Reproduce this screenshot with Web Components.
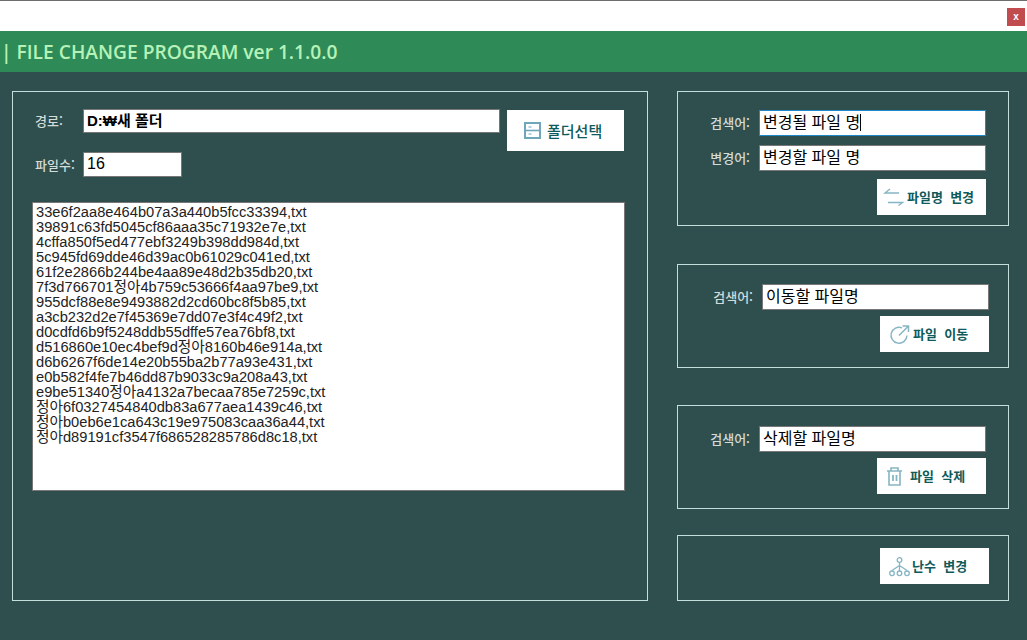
<!DOCTYPE html>
<html lang="ko">
<head>
<meta charset="utf-8">
<title>FILE CHANGE PROGRAM</title>
<style>
html,body{margin:0;height:640px;overflow:hidden;background:#2f4f4f}
</style>
</head>
<body>
<file-change-app></file-change-app>
<script>
/* ============ shared icon paths ============ */
var ICONS = {
  folder: '<rect x="1" y="1" width="15" height="15" fill="none" stroke-width="2"/><path d="M1 8.500h15" fill="none" stroke-width="1.600"/><path d="M4.500 5h3M4.500 12h3" fill="none" stroke-width="1.200"/>',
  swap: '<path d="M15 5H1l5-4M4 14.500h14.500l-4 3" fill="none" stroke-width="1.400"/>',
  move: '<path d="M12 2.800A8 8 0 1 0 17 10.500" fill="none" stroke-width="1.400"/><path d="M9 10.500L18 1.500M12.500 1h6v6" fill="none" stroke-width="1.500"/>',
  trash: '<path d="M0 4h15M4 4V1h7v3M2 4v14h11V4" fill="none" stroke-width="1.600"/><path d="M6 8v6M9.500 8v6" fill="none" stroke-width="1.800"/>',
  tree: '<circle cx="10.500" cy="3" r="2.300" fill="none" stroke-width="1.300"/><path d="M10.500 5.500v8.500M3 13.500l7.500-5 7.500 5" fill="none" stroke-width="1.300"/><circle cx="3" cy="16.300" r="2.300" fill="none" stroke-width="1.300"/><circle cx="10.500" cy="16.300" r="2.300" fill="none" stroke-width="1.300"/><circle cx="18" cy="16.300" r="2.300" fill="none" stroke-width="1.300"/>'
};
var KR = '"Noto Sans CJK KR",sans-serif';

/* title strip + green header */
class AppTitlebar extends HTMLElement {
  connectedCallback() {
    const root = this.attachShadow({ mode: 'open' });
    root.innerHTML = `<style>
:host{display:block}
.strip{box-sizing:border-box;height:31px;background:#fff;border-top:1px solid #6d6d6d;display:flex;justify-content:flex-end;align-items:flex-start;padding:7px 2px 0 0}
.close{width:18px;height:18px;background:#c04c50;color:#fff;font:700 10px/17px "Liberation Sans",sans-serif;text-align:center}
.head{height:41px;background:#2e8b57;color:#b6f2b8;font:600 19.200px/41px "Open Sans",sans-serif;padding-left:1px;white-space:nowrap}
</style><div class="strip"><div class="close">x</div></div><div class="head"><slot></slot></div>`;
  }
}
customElements.define('app-titlebar', AppTitlebar);

/* outlined group box */
class AppPanel extends HTMLElement {
  connectedCallback() {
    const root = this.attachShadow({ mode: 'open' });
    root.innerHTML = `<style>
:host{display:block;box-sizing:border-box;border:1px solid #c4dedc;background:#2f4f4f}
</style><slot></slot>`;
  }
}
customElements.define('app-panel', AppPanel);

/* label + text box */
class FieldRow extends HTMLElement {
  connectedCallback() {
    const root = this.attachShadow({ mode: 'open' });
    const w = this.getAttribute('width') || '227';
    const h = +(this.getAttribute('height') || 26);
    const lw = this.getAttribute('label-width') || '40';
    const gap = this.getAttribute('gap') || '9';
    const weight = this.getAttribute('weight') || '400';
    const fs = this.getAttribute('fs') || '16';
    const align = this.getAttribute('align') || 'right';
    const caret = this.hasAttribute('caret');
    root.innerHTML = `<style>
:host{display:flex;align-items:center}
.lab{width:${lw}px;margin-right:${gap}px;color:#d3dcd9;font:500 13px/16px ${KR};white-space:nowrap;text-align:${align}}
.box{box-sizing:border-box;width:${w}px;height:${h}px;background:#fff;border:1px solid ${caret ? '#1e88c8' : '#777'};color:#000;font:${weight} ${fs}px/${h - 3}px "Liberation Sans",${KR};padding-left:3px;white-space:nowrap;overflow:hidden}
.caret{display:inline-block;width:1px;height:17px;background:#000;vertical-align:-3px}
</style><div class="lab">${this.getAttribute('label')}</div><div class="box">${this.getAttribute('value')}${caret ? '<span class="caret"></span>' : ''}</div>`;
  }
}
customElements.define('field-row', FieldRow);

/* white flat button with a drawn icon */
class IconButton extends HTMLElement {
  connectedCallback() {
    const root = this.attachShadow({ mode: 'open' });
    const w = this.getAttribute('width') || '109';
    const h = this.getAttribute('height') || '36';
    const iw = this.getAttribute('iw') || '19';
    const ih = this.getAttribute('ih') || '19';
    const pad = this.getAttribute('pad') || '10';
    const gap = this.getAttribute('gap') || '4';
    const fs = this.getAttribute('fs') || '13';
    const weight = this.getAttribute('weight') || '700';
    const stroke = this.getAttribute('stroke') || '#86b5c4';
    root.innerHTML = `<style>
:host{display:block;width:${w}px}
.btn{box-sizing:border-box;width:${w}px;height:${h}px;background:#fff;display:flex;align-items:center;padding-left:${pad}px;gap:${gap}px}
svg{stroke:${stroke};flex:none;overflow:visible}
span{color:#0f5a5a;font:${weight} ${fs}px/16px ${KR};white-space:pre}
</style><div class="btn"><svg width="${iw}" height="${ih}" viewBox="0 0 ${iw} ${ih}">${ICONS[this.getAttribute('icon')]}</svg><span>${this.getAttribute('text')}</span></div>`;
  }
}
customElements.define('icon-button', IconButton);

/* file list box */
class FileList extends HTMLElement {
  connectedCallback() {
    const root = this.attachShadow({ mode: 'open' });
    const rows = ['33e6f2aa8e464b07a3a440b5fcc33394,txt','39891c63fd5045cf86aaa35c71932e7e,txt','4cffa850f5ed477ebf3249b398dd984d,txt','5c945fd69dde46d39ac0b61029c041ed,txt','61f2e2866b244be4aa89e48d2b35db20,txt','7f3d766701정아4b759c53666f4aa97be9,txt','955dcf88e8e9493882d2cd60bc8f5b85,txt','a3cb232d2e7f45369e7dd07e3f4c49f2,txt','d0cdfd6b9f5248ddb55dffe57ea76bf8,txt','d516860e10ec4bef9d정아8160b46e914a,txt','d6b6267f6de14e20b55ba2b77a93e431,txt','e0b582f4fe7b46dd87b9033c9a208a43,txt','e9be51340정아a4132a7becaa785e7259c,txt','정아6f0327454840db83a677aea1439c46,txt','정아b0eb6e1ca643c19e975083caa36a44,txt','정아d89191cf3547f686528285786d8c18,txt'];
    root.innerHTML = `<style>
:host{display:block;box-sizing:border-box;height:289px;background:#fff;border:1px solid #777;padding:2px 0 0 3px;color:#222;font:14.670px/15px "Liberation Sans",${KR};overflow:hidden}
div{white-space:nowrap}
</style>` + rows.map(function (r) { return '<div>' + r + '</div>'; }).join('');
  }
}
customElements.define('file-list', FileList);

/* page: whole window */
class FileChangeApp extends HTMLElement {
  connectedCallback() {
    const root = this.attachShadow({ mode: 'open' });
    root.innerHTML = `<style>
:host{display:block;width:1027px;height:640px;background:#2f4f4f}
.main{display:grid;grid-template-columns:636px 332px;column-gap:29px;padding:19px 0 0 12px}
.left{height:510px;padding:17px 23px 0 19px;box-sizing:border-box}
.top{display:flex;justify-content:space-between}
.fields{display:flex;flex-direction:column;gap:19px;width:468px}
.fields field-row{margin-left:3px}
.top icon-button{margin-top:1px}
.right{display:flex;flex-direction:column}
.p1{height:135px;padding:18px 22px 0 0;margin-bottom:38px}
.p2{height:104px;padding:19px 19px 0 0;margin-bottom:37px}
.p3{height:104px;padding:20px 22px 0 0;margin-bottom:26px}
.p4{height:66px;padding:12px 19px 0 0}
.col{display:flex;flex-direction:column;align-items:flex-end}
.col icon-button{margin-top:6px}
.p1 icon-button{margin-top:8px}
.p4 icon-button{margin-top:0}
.p1 field-row + field-row{margin-top:9px}
.left file-list{margin-top:25px;width:593px}
</style>
<app-titlebar>| FILE CHANGE PROGRAM ver 1.1.0.0</app-titlebar>
<div class="main">
  <app-panel class="left">
    <div class="top">
      <div class="fields">
        <field-row label="경로:" align="left" label-width="45" gap="3" width="417" height="24" weight="700" fs="15" value="D:₩새 폴더"></field-row>
        <field-row label="파일수:" align="left" label-width="45" gap="3" width="99" height="25" value="16"></field-row>
      </div>
      <icon-button icon="folder" iw="17" ih="17" width="117" height="41" pad="17" gap="6" fs="15" weight="500" stroke="#6fa6ba" text="폴더선택"></icon-button>
    </div>
    <file-list></file-list>
  </app-panel>
  <div class="right">
    <app-panel class="p1"><div class="col">
      <field-row label="검색어:" value="변경될 파일 명" caret></field-row>
      <field-row label="변경어:" value="변경할 파일 명"></field-row>
      <icon-button icon="swap" pad="7" iw="19" ih="18" gap="4" text="파일명  변경"></icon-button>
    </div></app-panel>
    <app-panel class="p2"><div class="col">
      <field-row label="검색어:" value="이동할 파일명"></field-row>
      <icon-button icon="move" text="파일  이동"></icon-button>
    </div></app-panel>
    <app-panel class="p3"><div class="col">
      <field-row label="검색어:" value="삭제할 파일명"></field-row>
      <icon-button icon="trash" iw="15" gap="8" text="파일  삭제"></icon-button>
    </div></app-panel>
    <app-panel class="p4"><div class="col">
      <icon-button icon="tree" pad="9" iw="21" gap="2" text="난수  변경"></icon-button>
    </div></app-panel>
  </div>
</div>`;
  }
}
customElements.define('file-change-app', FileChangeApp);
</script>
</body>
</html>
